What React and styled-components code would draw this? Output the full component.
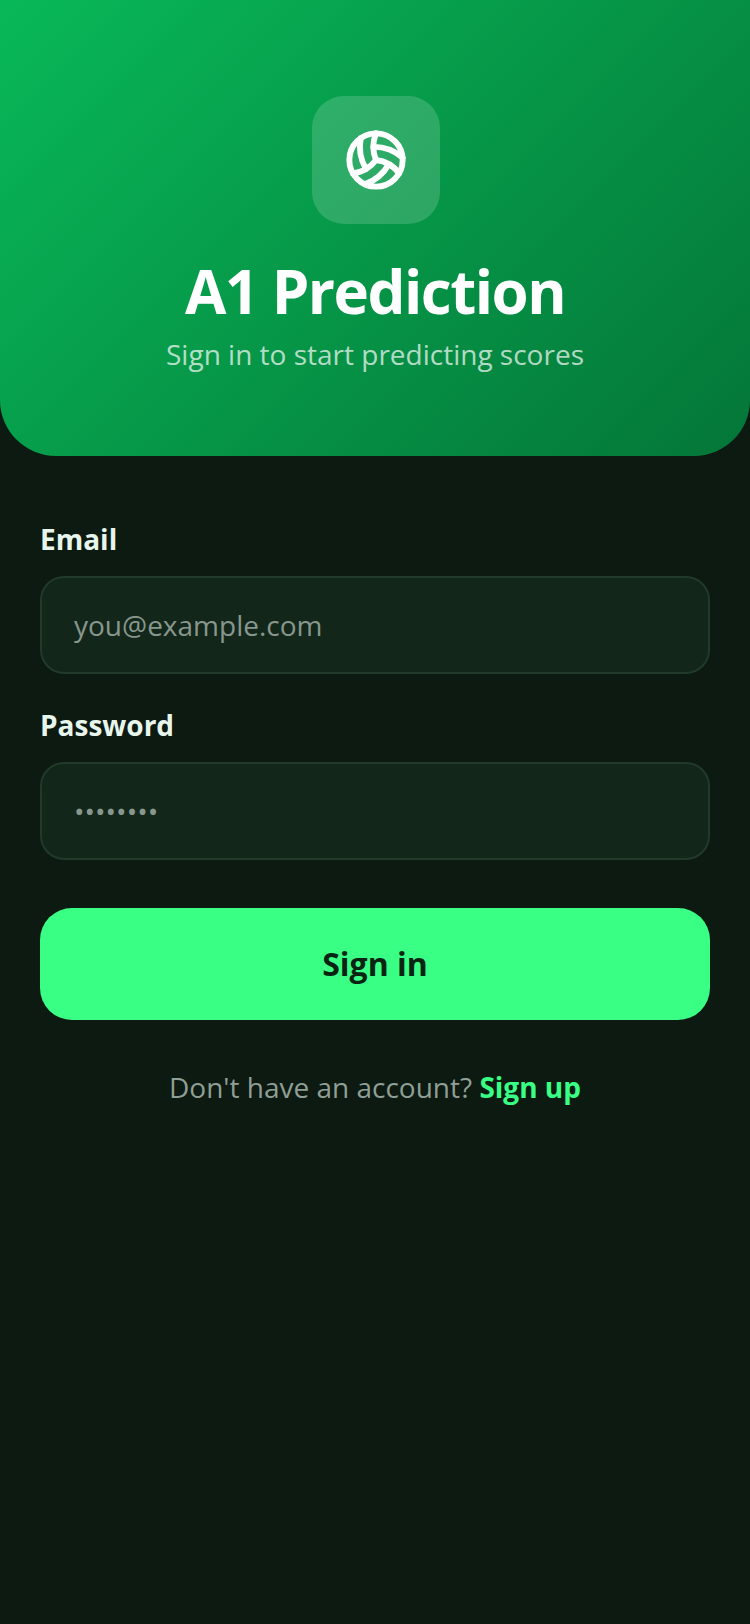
import React from "react";
import styled, { createGlobalStyle } from "styled-components";
import { Volleyball } from "lucide-react";

const Global = createGlobalStyle`
  * { box-sizing: border-box; }
  html, body { margin: 0; padding: 0; background: #0c1a12; }
  body { font-family: "Open Sans", "Liberation Sans", sans-serif; }
`;

const Page = styled.div`
  min-height: 1624px;
  width: 750px;
  background: #0c1a12;
  display: flex;
  flex-direction: column;
`;

const Hero = styled.header`
  height: 456px;
  padding-top: 96px;
  display: flex;
  flex-direction: column;
  align-items: center;
  background: linear-gradient(135deg, #08b858 0%, #047638 100%);
  border-radius: 0 0 56px 56px;
`;

const LogoTile = styled.div`
  width: 128px;
  height: 128px;
  margin-left: 2px;
  border-radius: 32px;
  background: rgba(255, 255, 255, 0.16);
  display: flex;
  align-items: center;
  justify-content: center;
  color: #fff;
`;

const Title = styled.h1`
  margin: 33px 0 0;
  font-size: 60px;
  line-height: 68px;
  font-weight: 700;
  letter-spacing: -1.5px;
  color: #fff;
`;

const Subtitle = styled.p`
  margin: 10px 0 0;
  font-size: 28px;
  line-height: 38px;
  color: rgba(255, 255, 255, 0.7);
`;

const Form = styled.form`
  padding: 64px 40px 0;
  display: flex;
  flex-direction: column;
`;

const Field = styled.div`
  display: flex;
  flex-direction: column;
  gap: 18px;
  margin-bottom: 32px;
`;

const Label = styled.label`
  font-size: 28px;
  line-height: 38px;
  font-weight: 700;
  color: #e8f5ec;
`;

const Input = styled.input`
  height: 98px;
  padding: 0 32px;
  border: 2px solid #213a2a;
  border-radius: 24px;
  background: #13261a;
  font-family: inherit;
  font-size: 28px;
  color: #e8f5ec;
  outline: none;
  &::placeholder { color: #87978d; opacity: 1; }
`;

const Submit = styled.button`
  height: 112px;
  margin-top: 16px;
  padding: 0 0 2px;
  border: 0;
  border-radius: 32px;
  background: #39ff85;
  color: #0a2414;
  font-family: inherit;
  font-size: 32px;
  font-weight: 700;
`;

const Footer = styled.p`
  margin: 48px 0 0;
  text-align: center;
  font-size: 28px;
  line-height: 38px;
  color: #8f9f95;
`;

const FooterLink = styled.a`
  color: #39ff85;
  font-weight: 700;
`;

export default function App() {
  return (
    <Page>
      <Global />
      <Hero>
        <LogoTile>
          <Volleyball size={64} strokeWidth={2.2} />
        </LogoTile>
        <Title>A1 Prediction</Title>
        <Subtitle>Sign in to start predicting scores</Subtitle>
      </Hero>
      <Form onSubmit={(e) => e.preventDefault()}>
        <Field>
          <Label htmlFor="email">Email</Label>
          <Input id="email" type="email" placeholder="you@example.com" />
        </Field>
        <Field>
          <Label htmlFor="password">Password</Label>
          <Input id="password" type="password" placeholder="••••••••" />
        </Field>
        <Submit type="submit">Sign in</Submit>
        <Footer>
          Don't have an account? <FooterLink>Sign up</FooterLink>
        </Footer>
      </Form>
    </Page>
  );
}
